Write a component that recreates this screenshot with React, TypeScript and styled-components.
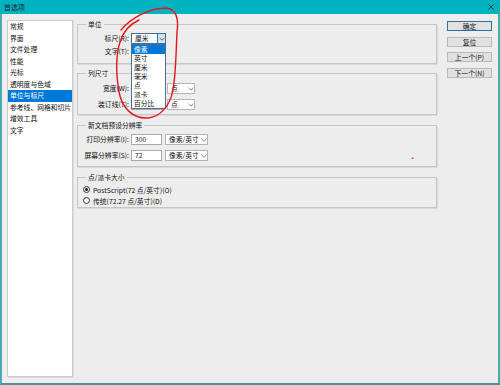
import React from 'react';
import styled, { createGlobalStyle } from 'styled-components';

const GlobalStyle = createGlobalStyle`
  html, body { margin: 0; padding: 0; background: #ededed; }
  body {
    width: 500px; height: 385px; overflow: hidden;
    font-family: "Noto Sans CJK SC", "Noto Sans", sans-serif;
  }
  * { box-sizing: border-box; }
`;

const Window = styled.div`
  position: relative;
  width: 500px;
  height: 385px;
  display: flex;
  flex-direction: column;
  background: #ededed;
  font-size: 6.8px;
  color: #111;
`;

const TitleBar = styled.div`
  height: 14px;
  flex: none;
  background: #00b3c0;
  display: flex;
  align-items: center;
  justify-content: space-between;
  padding: 0 6px 0 4px;
  font-size: 7px;
  color: #102a2c;
`;

const Body = styled.div`
  flex: 1;
  display: flex;
  padding: 6px 6px 6px 5px;
  border-left: 2px solid #4aaab2;
  border-right: 2px solid #4aaab2;
  border-bottom: 2px solid #4d9198;
  min-height: 0;
`;

const Sidebar = styled.ul`
  width: 66px;
  flex: none;
  margin: 0;
  padding: 0;
  list-style: none;
  background: #fff;
  border: 1px solid #cbcbcb;
  box-shadow: 1px 1px 0 #dedede;
`;

const NavItem = styled.li<{ $active?: boolean }>`
  height: 11.5px;
  line-height: 11.5px;
  padding-left: 2px;
  white-space: nowrap;
  background: ${p => (p.$active ? '#0078d7' : 'transparent')};
  color: ${p => (p.$active ? '#fff' : '#111')};
`;

const Main = styled.div`
  width: 360px;
  flex: none;
  margin-left: 4px;
  display: flex;
  flex-direction: column;
`;

const Group = styled.fieldset<{ $mt: number; $pt: number; $pb: number }>`
  margin: ${p => p.$mt}px 0 0 0;
  padding: ${p => p.$pt}px 0 ${p => p.$pb}px 0;
  border: 1px solid #c6c6c6;
  box-shadow: 1px 1px 0 #dadada;
  min-width: 0;
`;

const Legend = styled.legend`
  margin-left: 8px;
  padding: 0 2px;
  height: 9px;
  line-height: 9px;
  font-size: 6.8px;
`;

const FormGrid = styled.div<{ $gap: number }>`
  display: grid;
  grid-template-columns: 53px auto;
  row-gap: ${p => p.$gap}px;
  align-items: center;
  justify-content: start;
`;

const Label = styled.span`
  text-align: right;
  padding-right: 2px;
  white-space: nowrap;
  line-height: 11px;
`;

const Controls = styled.div`
  display: flex;
  gap: 3px;
  height: 11px;
`;

const Anchor = styled.div`
  position: relative;
  display: flex;
`;

const TextBox = styled.div<{ $w: number }>`
  width: ${p => p.$w}px;
  height: 11px;
  background: #fff;
  border: 1px solid #a9a9a9;
  padding-left: 3px;
  line-height: 9px;
`;

const Combo = styled.div<{ $w: number; $focus?: boolean }>`
  width: ${p => p.$w}px;
  height: 11px;
  background: #fff;
  border: 1px solid ${p => (p.$focus ? '#3d6f9e' : '#b4b4b4')};
  display: flex;
  align-items: stretch;
  line-height: 9px;
`;

const ComboText = styled.span`
  flex: 1;
  padding-left: 3px;
  white-space: nowrap;
  overflow: hidden;
`;

const ComboArrow = styled.span<{ $focus?: boolean }>`
  width: 8px;
  display: flex;
  align-items: center;
  justify-content: center;
  background: ${p => (p.$focus ? '#d4e6f6' : 'transparent')};
  border-left: 1px solid ${p => (p.$focus ? '#3d6f9e' : 'transparent')};
`;

const DropList = styled.ul`
  position: absolute;
  top: 11px;
  left: 0;
  width: 35px;
  margin: 0;
  padding: 0;
  list-style: none;
  background: #fff;
  border: 1px solid #4f6f96;
  z-index: 2;
`;

const DropItem = styled.li<{ $active?: boolean }>`
  height: 9px;
  line-height: 9px;
  padding-left: 2px;
  background: ${p => (p.$active ? '#0078d7' : '#fff')};
  color: ${p => (p.$active ? '#fff' : '#111')};
`;

const RadioList = styled.div`
  display: flex;
  flex-direction: column;
  padding-left: 5px;
`;

const RadioRow = styled.label`
  height: 11px;
  display: flex;
  align-items: center;
  gap: 3px;
  white-space: nowrap;
`;

const RadioDot = styled.span<{ $checked?: boolean }>`
  width: 7px;
  height: 7px;
  border-radius: 50%;
  border: 1px solid #333;
  background: #fff;
  display: flex;
  align-items: center;
  justify-content: center;
  &::after {
    content: '';
    width: 3px;
    height: 3px;
    border-radius: 50%;
    background: ${p => (p.$checked ? '#111' : 'transparent')};
  }
`;

const ButtonCol = styled.div`
  width: 45px;
  flex: none;
  margin-left: 10px;
  padding-top: 1px;
  display: flex;
  flex-direction: column;
  gap: 5.5px;
`;

const Button = styled.button<{ $default?: boolean }>`
  height: 10px;
  width: 45px;
  padding: 0;
  font: inherit;
  font-size: 6.8px;
  line-height: 8px;
  color: #111;
  background: #e1e1e1;
  border: 1px solid ${p => (p.$default ? '#2f6fae' : '#b9b9b9')};
`;

const Annotation = styled.svg`
  position: absolute;
  left: 0;
  top: 0;
  pointer-events: none;
  z-index: 5;
`;

const Chevron = ({ color = '#666' }: { color?: string }) => (
  <svg width="6" height="4" viewBox="0 0 6 4">
    <path d="M0.5 0.8 L3 3.2 L5.5 0.8" fill="none" stroke={color} strokeWidth="0.8" />
  </svg>
);

const navItems = ['常规', '界面', '文件处理', '性能', '光标', '透明度与色域', '单位与标尺', '参考线、网格和切片', '增效工具', '文字'];
const units = ['像素', '英寸', '厘米', '毫米', '点', '派卡', '百分比'];

export default function App() {
  return (
    <>
      <GlobalStyle />
      <Window>
        <TitleBar>
          <span>首选项</span>
          <svg width="6" height="6" viewBox="0 0 6 6">
            <path d="M0.5 0.5 L5.5 5.5 M5.5 0.5 L0.5 5.5" stroke="#1c3436" strokeWidth="0.9" />
          </svg>
        </TitleBar>
        <Body>
          <Sidebar>
            {navItems.map(n => (
              <NavItem key={n} $active={n === '单位与标尺'}>{n}</NavItem>
            ))}
          </Sidebar>
          <Main>
            <Group $mt={0} $pt={4} $pb={6}>
              <Legend>单位</Legend>
              <FormGrid $gap={2}>
                <Label>标尺(R):</Label>
                <Controls>
                  <Anchor>
                    <Combo $w={35} $focus>
                      <ComboText>厘米</ComboText>
                      <ComboArrow $focus><Chevron color="#444" /></ComboArrow>
                    </Combo>
                    <DropList>
                      {units.map(u => (
                        <DropItem key={u} $active={u === '像素'}>{u}</DropItem>
                      ))}
                    </DropList>
                  </Anchor>
                </Controls>
                <Label>文字(T):</Label>
                <Controls>
                  <Combo $w={35}>
                    <ComboText />
                    <ComboArrow><Chevron /></ComboArrow>
                  </Combo>
                </Controls>
              </FormGrid>
            </Group>

            <Group $mt={5} $pt={5} $pb={4}>
              <Legend>列尺寸</Legend>
              <FormGrid $gap={5}>
                <Label>宽度(W):</Label>
                <Controls>
                  <TextBox $w={33} />
                  <Combo $w={28}>
                    <ComboText>点</ComboText>
                    <ComboArrow><Chevron /></ComboArrow>
                  </Combo>
                </Controls>
                <Label>装订线(T):</Label>
                <Controls>
                  <TextBox $w={33} />
                  <Combo $w={28}>
                    <ComboText>点</ComboText>
                    <ComboArrow><Chevron /></ComboArrow>
                  </Combo>
                </Controls>
              </FormGrid>
            </Group>

            <Group $mt={6} $pt={4} $pb={5}>
              <Legend>新文档预设分辨率</Legend>
              <FormGrid $gap={5}>
                <Label>打印分辨率(I):</Label>
                <Controls>
                  <TextBox $w={31}>300</TextBox>
                  <Combo $w={43}>
                    <ComboText>像素/英寸</ComboText>
                    <ComboArrow><Chevron /></ComboArrow>
                  </Combo>
                </Controls>
                <Label>屏幕分辨率(S):</Label>
                <Controls>
                  <TextBox $w={31}>72</TextBox>
                  <Combo $w={43}>
                    <ComboText>像素/英寸</ComboText>
                    <ComboArrow><Chevron /></ComboArrow>
                  </Combo>
                </Controls>
              </FormGrid>
            </Group>

            <Group $mt={6} $pt={2} $pb={1}>
              <Legend>点/派卡大小</Legend>
              <RadioList>
                <RadioRow><RadioDot $checked />PostScript(72 点/英寸)(O)</RadioRow>
                <RadioRow><RadioDot />传统(72.27 点/英寸)(D)</RadioRow>
              </RadioList>
            </Group>
          </Main>
          <ButtonCol>
            <Button $default>确定</Button>
            <Button>复位</Button>
            <Button>上一个(P)</Button>
            <Button>下一个(N)</Button>
          </ButtonCol>
        </Body>
        <Annotation width="500" height="385" viewBox="0 0 500 385">
          <path
            d="M121 30 C132 17 150 8 166 8 C176 9 179 18 177 32 C176 52 176 72 173 90 C170 106 160 117 148 118 C133 119 122 108 119 92 C116 74 116 55 120 42 C123 32 130 24 139 20"
            fill="none"
            stroke="#e3161e"
            strokeWidth="1.4"
            strokeLinecap="round"
          />
          <rect x="411.5" y="157.5" width="2" height="1.5" fill="#ef4a52" />
        </Annotation>
      </Window>
    </>
  );
}
